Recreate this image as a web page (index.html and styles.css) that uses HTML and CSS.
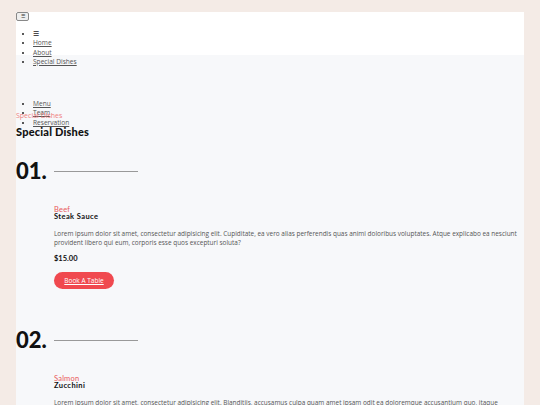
FILE: index.html
```html
<!DOCTYPE html>
<html lang="en">
<head>
    <meta charset="UTF-8">
    <meta name="viewport" content="width=device-width, initial-scale=1.0">
    <title>Special Dishes</title>
    <link rel="stylesheet" href="styles.css">
</head>
<body>
    <div class="page">
        <header class="header">
            <button class="menu-btn">☰</button>
            <ul class="nav-list">
                <li>☰</li>
                <li><a href="#">Home</a></li>
                <li><a href="#">About</a></li>
                <li><a href="#">Special Dishes</a></li>
            </ul>
            <ul class="nav-list nav-right">
                <li><a href="#">Menu</a></li>
                <li><a href="#">Team</a></li>
                <li><a href="#">Reservation</a></li>
            </ul>
        </header>

        <section class="dishes">
            <p class="sub-title">Special Dishes</p>
            <h2 class="title">Special Dishes</h2>

            <div class="dish">
                <div class="dish-num">
                    <span>01.</span>
                    <div class="dish-line"></div>
                </div>
                <div class="dish-body">
                    <p class="dish-type">Beef</p>
                    <h3 class="dish-name">Steak Sauce</h3>
                    <p class="dish-text">Lorem ipsum dolor sit amet, consectetur adipisicing elit. Cupiditate, ea vero alias perferendis quas animi doloribus voluptates. Atque explicabo ea nesciunt provident libero qui eum, corporis esse quos excepturi soluta?</p>
                    <p class="dish-price">$15.00</p>
                    <a href="#" class="book-btn">Book A Table</a>
                </div>
            </div>

            <div class="dish">
                <div class="dish-num">
                    <span>02.</span>
                    <div class="dish-line"></div>
                </div>
                <div class="dish-body">
                    <p class="dish-type">Salmon</p>
                    <h3 class="dish-name">Zucchini</h3>
                    <p class="dish-text">Lorem ipsum dolor sit amet, consectetur adipisicing elit. Blanditiis, accusamus culpa quam amet ipsam odit ea doloremque accusantium quo, itaque possimus eius officiis vel nulla nesciunt dolorum molestias.</p>
                    <p class="dish-price">$18.00</p>
                    <a href="#" class="book-btn">Book A Table</a>
                </div>
            </div>
        </section>
    </div>
</body>
</html>
```

FILE: styles.css
```css
* {
    margin: 0;
    padding: 0;
    box-sizing: border-box;
}

body {
    background: #f4ebe6;
    font-family: "Open Sans", sans-serif;
}

.page {
    margin: 12px 16px 0;
    background: #f7f8fa;
    min-height: 400px;
}

.header {
    background: white;
    height: 43px;
}

.menu-btn {
    display: block;
    width: 13px;
    height: 9px;
    margin-top: 1px;
    font-size: 5px;
    line-height: 7px;
    color: #333;
    background: #eee;
    border: 1px solid #888;
    border-radius: 2px;
}

.nav-list {
    margin-top: 8px;
    padding-left: 17px;
    font-size: 6.6px;
    line-height: 9.3px;
    color: #222;
}

.nav-list a {
    color: #555;
}

.nav-right {
    margin-top: 32.8px;
}

.dishes {
    padding-top: 55.5px;
}

.sub-title {
    font-size: 7px;
    line-height: 9px;
    color: #ef7f7f;
}

.title {
    margin-top: 5px;
    font-family: Lato, sans-serif;
    font-size: 11px;
    line-height: 13px;
    font-weight: 900;
    letter-spacing: 0.2px;
    color: #111;
}

.dish-num {
    display: flex;
    align-items: center;
    margin-top: 20.5px;
    height: 24px;
}

.dish-num span {
    width: 38px;
    font-family: Lato, sans-serif;
    font-size: 22px;
    font-weight: 900;
    color: #111;
}

.dish-line {
    width: 84px;
    height: 1px;
    background: #999;
    margin-top: 2px;
}

.dish + .dish .dish-num {
    margin-top: 39px;
}

.dish-body {
    margin-left: 38px;
    padding-top: 23.5px;
}

.dish-type {
    font-family: Lato, sans-serif;
    font-size: 7.5px;
    line-height: 7px;
    letter-spacing: 0.2px;
    color: #e95a5a;
}

.dish-name {
    font-family: Lato, sans-serif;
    font-size: 7.5px;
    line-height: 8px;
    font-weight: bold;
    letter-spacing: 0.4px;
    color: #111;
}

.dish-text {
    margin-top: 8px;
    font-size: 6.45px;
    line-height: 9px;
    color: #555;
}

.dish-price {
    margin-top: 7px;
    font-family: Lato, sans-serif;
    font-size: 7.5px;
    line-height: 10px;
    font-weight: bold;
    color: #111;
}

.book-btn {
    display: inline-block;
    margin-top: 8px;
    width: 60px;
    height: 17px;
    line-height: 17px;
    text-align: center;
    background: #f0494f;
    color: white;
    font-size: 6.5px;
    border-radius: 9px;
}
```
